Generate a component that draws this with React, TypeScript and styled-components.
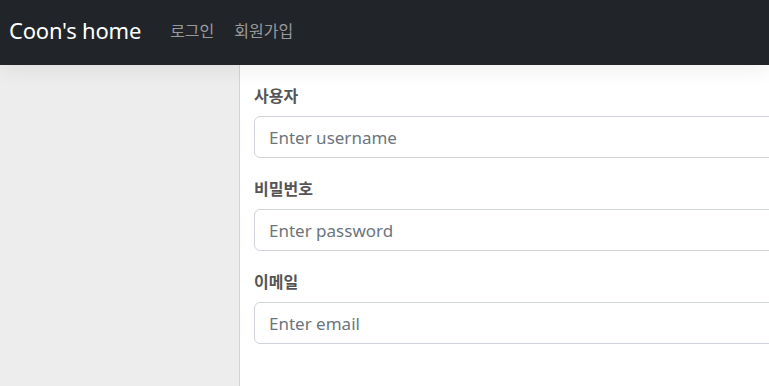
import React from 'react';
import styled, { createGlobalStyle } from 'styled-components';

const FIELDS = [
  { label: '사용자', placeholder: 'Enter username', type: 'text' },
  { label: '비밀번호', placeholder: 'Enter password', type: 'password' },
  { label: '이메일', placeholder: 'Enter email', type: 'email' },
];

const App: React.FC = () => {
  return (
    <Page>
      <GlobalStyle />
      <NavBar>
        <Brand>Coon's home</Brand>
        <NavLinks>
          <NavLink href="#">로그인</NavLink>
          <NavLink href="#">회원가입</NavLink>
        </NavLinks>
      </NavBar>
      <Body>
        <SidePanel />
        <Main>
          {FIELDS.map((field) => (
            <Field key={field.label}>
              <Label>{field.label}</Label>
              <Input type={field.type} placeholder={field.placeholder} />
            </Field>
          ))}
        </Main>
      </Body>
    </Page>
  );
};

export default App;

const GlobalStyle = createGlobalStyle`
  * {
    box-sizing: border-box;
  }

  html, body {
    margin: 0;
    padding: 0;
    overflow: hidden;
    background: #ffffff;
    font-family: 'Noto Sans', 'Noto Sans CJK KR', sans-serif;
  }
`;

const Page = styled.div`
  width: 769px;
  height: 386px;
  overflow: hidden;
  display: flex;
  flex-direction: column;
`;

const NavBar = styled.nav`
  height: 65px;
  flex-shrink: 0;
  padding-left: 9px;
  background-color: #212529;
  box-shadow: 0 6px 20px rgba(0, 0, 0, 0.06);

  position: relative;
  z-index: 1;
  display: flex;
  align-items: center;
`;

const Brand = styled.span`
  font-size: 22px;
  line-height: 1;
  color: #ffffff;
  letter-spacing: -0.2px;
  margin-top: -5px;
`;

const NavLinks = styled.div`
  margin-left: 29px;
  display: flex;
  gap: 20px;
  margin-top: -6px;
`;

const NavLink = styled.a`
  font-size: 16px;
  color: rgba(255, 255, 255, 0.55);
  text-decoration: none;
`;

const Body = styled.div`
  flex: 1;
  display: flex;
`;

const SidePanel = styled.aside`
  width: 240px;
  flex-shrink: 0;
  background-color: #ededed;
  border-right: 1px solid #d4d4d4;
`;

const Main = styled.main`
  flex: 1;
  padding: 19px 0 0 14px;
  display: flex;
  flex-direction: column;
  gap: 19px;
`;

const Field = styled.div`
  display: flex;
  flex-direction: column;
  gap: 8px;
`;

const Label = styled.label`
  font-size: 16px;
  font-weight: 600;
  line-height: 24px;
  color: #555555;
`;

const Input = styled.input`
  width: 640px;
  height: 42px;
  padding: 0 14px;
  border: 1px solid #ced4da;
  border-radius: 6px;
  background: #ffffff;

  font-family: 'Noto Sans', 'Noto Sans CJK KR', sans-serif;
  font-size: 17px;
  color: #212529;
  outline: none;

  &::placeholder {
    color: #6c757d;
  }
`;
